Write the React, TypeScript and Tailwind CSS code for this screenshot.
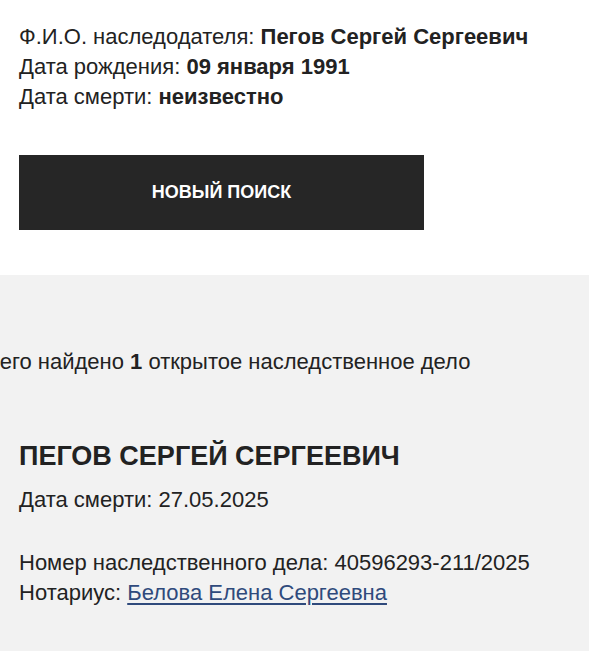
import React from 'react';

const font = { fontFamily: '"Liberation Sans", Arial, sans-serif' };

const App: React.FC = () => {
  return (
    <div className="min-h-screen w-[589px] overflow-hidden bg-[#f2f2f2] text-[#222222]" style={font}>
      <section className="bg-white px-[19px] pt-[22px] pb-[45px]">
        <div className="text-[22px] leading-[30px] font-light">
          <p>
            Ф.И.О. наследодателя: <b className="font-bold">Пегов Сергей Сергеевич</b>
          </p>
          <p>
            Дата рождения: <b className="font-bold">09 января 1991</b>
          </p>
          <p>
            Дата смерти: <b className="font-bold">неизвестно</b>
          </p>
        </div>
        <button className="mt-[43px] flex h-[75px] w-[405px] items-center justify-center bg-[#262626] text-[18px] font-bold text-white">
          НОВЫЙ ПОИСК
        </button>
      </section>

      <section className="pt-[72px] pb-[40px]">
        <p className="-ml-[26px] whitespace-nowrap text-[22px] leading-[30px]">
          Всего найдено <b className="font-bold">1</b> открытое наследственное дело
        </p>

        <div className="mt-[64px] px-[19px]">
          <h2 className="text-[27px] font-bold leading-[30px]">ПЕГОВ СЕРГЕЙ СЕРГЕЕВИЧ</h2>
          <p className="mt-[14px] text-[22px] leading-[30px]">Дата смерти: 27.05.2025</p>
          <div className="mt-[33px] text-[22px] leading-[30px]">
            <p>Номер наследственного дела: 40596293-211/2025</p>
            <p>
              Нотариус:{' '}
              <a href="#" className="text-[#2f4a7c] underline underline-offset-[3px]">
                Белова Елена Сергеевна
              </a>
            </p>
          </div>
        </div>
      </section>
    </div>
  );
};

export default App;
